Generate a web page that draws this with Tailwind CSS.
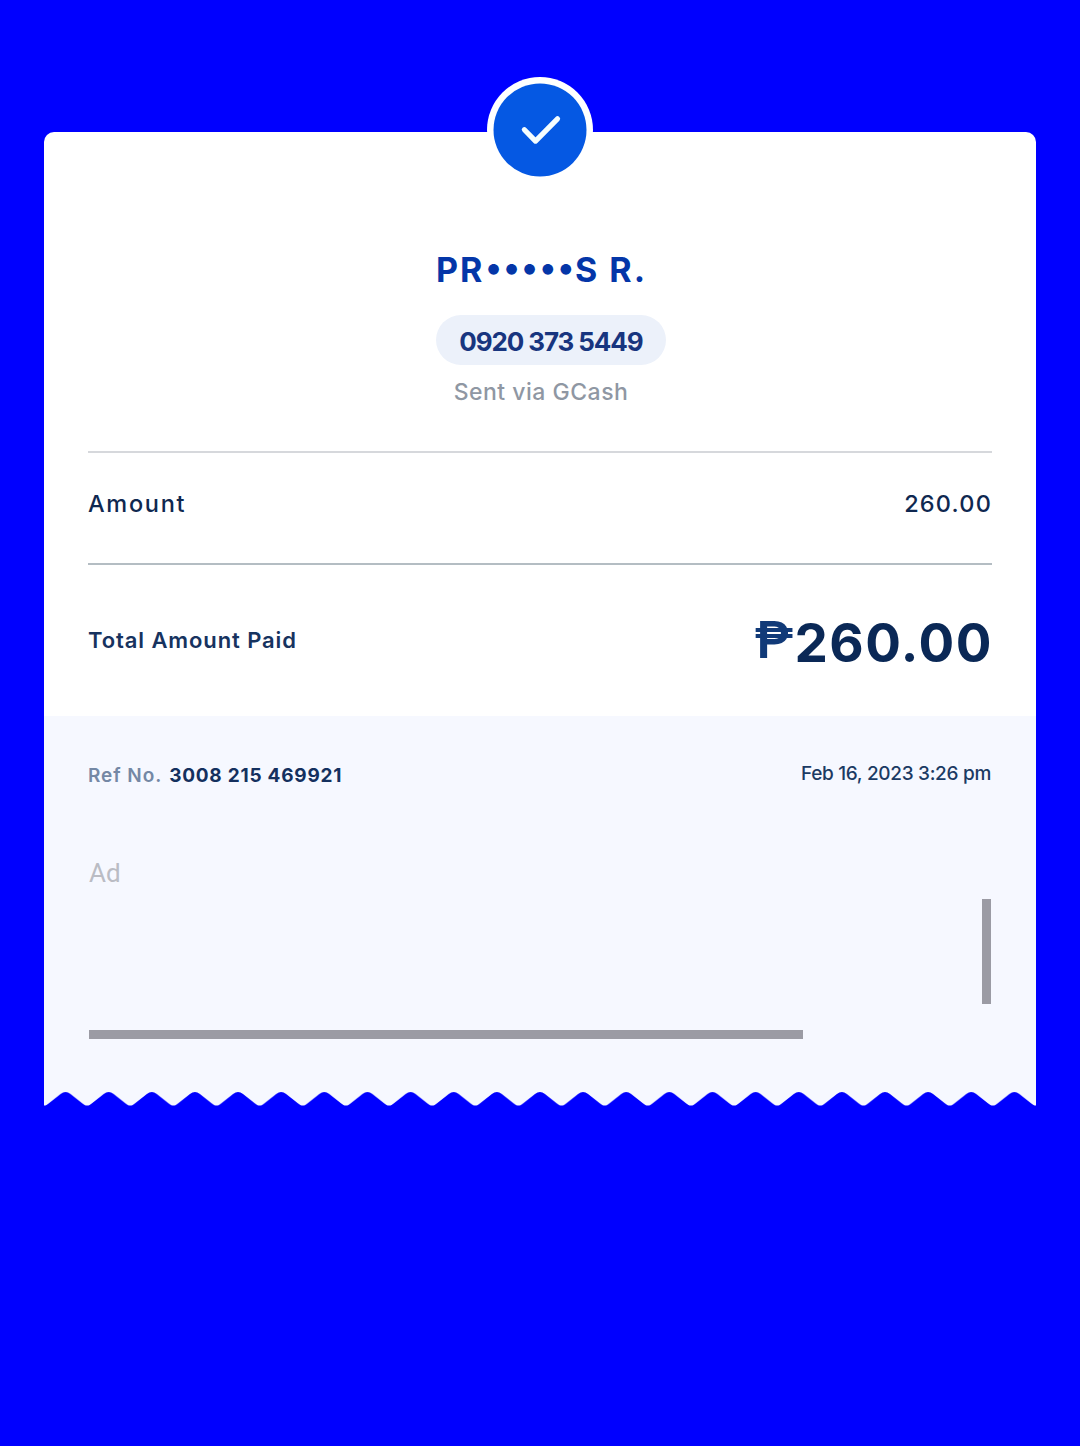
<!DOCTYPE html>
<html lang="en">
<head>
<meta charset="utf-8">
<title>Receipt</title>
<script src="https://cdn.jsdelivr.net/npm/@tailwindcss/browser@4"></script>
</head>
<body class="bg-[#0000ff] font-['Inter',sans-serif]">
<main class="h-[1446px] overflow-hidden px-11 pt-[132px]">
  <section class="relative">
    <div class="absolute -top-[55px] left-1/2 flex size-[106px] -translate-x-1/2 items-center justify-center rounded-full bg-white">
      <div class="flex size-[93px] -translate-x-[0.5px] -translate-y-[0.5px] items-center justify-center rounded-full bg-[#0558e3]">
        <svg class="h-[30px] w-[40px] overflow-visible" viewBox="0 0 40 30" fill="none" stroke="#f5fdff" stroke-width="5.2" stroke-linecap="round" stroke-linejoin="round"><path d="M4.9 15.2 16 26.6 38 4.3"/></svg>
      </div>
    </div>
    <div class="flex h-[584px] flex-col rounded-t-[10px] bg-white px-11 pt-[114px]">
      <header class="flex flex-col items-center">
        <h1 class="flex h-[47px] items-center whitespace-nowrap pl-[3px] text-[34px] font-bold tracking-[2px] text-[#0436a8]"><span class="mr-px">PR</span><span class="-mr-px pb-[6px]">•••••</span><span>S R.</span></h1>
        <p class="ml-[22px] mt-[22px] flex h-[50px] w-[230px] items-center justify-center whitespace-nowrap rounded-full bg-[#ecf1fa] pt-0.5 text-[26px] font-bold tracking-[-1.1px] text-[#18357f]"><span>0920 373 5449</span></p>
        <p class="mt-2 flex h-10 items-center whitespace-nowrap pb-0.5 pl-0.5 text-[23px] font-medium tracking-[.5px] text-[#8f97a3]"><span>Sent via GCash</span></p>
      </header>
      <div class="mt-[38px] flex h-[112px] items-center justify-between border-t-2 border-[#d6d8dc] pb-2 text-[23.5px] font-medium text-[#0f2850]">
        <span class="tracking-[1.7px]">Amount</span><span class="tracking-[1.2px]">260.00</span>
      </div>
      <div class="flex h-[153px] items-center justify-between border-t-2 border-[#b4bdc3]">
        <span class="pb-px text-[22px] font-semibold tracking-[.9px] text-[#17335f]">Total Amount Paid</span>
        <span class="-mr-px flex items-center font-bold text-[#0a2856]"><span class="font-['Roboto',sans-serif] text-[52px] font-semibold tracking-[1px] text-[#113a78]">₱</span><span class="pt-[7px] text-[53px] tracking-[1.5px]">260.00</span></span>
      </div>
    </div>
    <div class="h-[376px] bg-[#f6f8ff] px-11">
      <div class="flex h-[118px] items-center justify-between text-[19px]">
        <p class="flex gap-[7px] pt-0.5 font-semibold tracking-[.93px] text-[#7488a5]"><span>Ref No.</span><span class="font-bold tracking-[.77px] text-[#14305e]">3008 215 469921</span></p>
        <span class="pb-0.5 pr-px font-medium tracking-[-.3px] text-[#1b3a63]">Feb 16, 2023 3:26 pm</span>
      </div>
      <div class="flex h-[65px] items-end pb-1.5 pl-px"><span class="font-['Roboto',sans-serif] text-[26px] text-[#babcc4]">Ad</span></div>
      <div class="flex h-[105px] justify-end pr-px"><div class="w-[9px] bg-[#9b9ba4]"></div></div>
      <div class="ml-px mt-[26px] h-[9px] w-[714px] bg-[#9b9ba4]"></div>
    </div>
    <svg class="block h-[14px] w-[992px]" viewBox="0 0 992 14">
      <defs><pattern id="edge" width="43.13" height="14" patternUnits="userSpaceOnUse"><path fill="#f6f8ff" d="M0 0V13.6C2 13.6 3.2 12.6 4.6 11.5L16.6 2Q21.57-2 26.5 2L38.5 11.5C40 12.6 41.2 13.6 43.13 13.6V0Z"/></pattern></defs>
      <rect width="992" height="14" fill="url(#edge)"/>
    </svg>
  </section>
</main>
</body>
</html>
